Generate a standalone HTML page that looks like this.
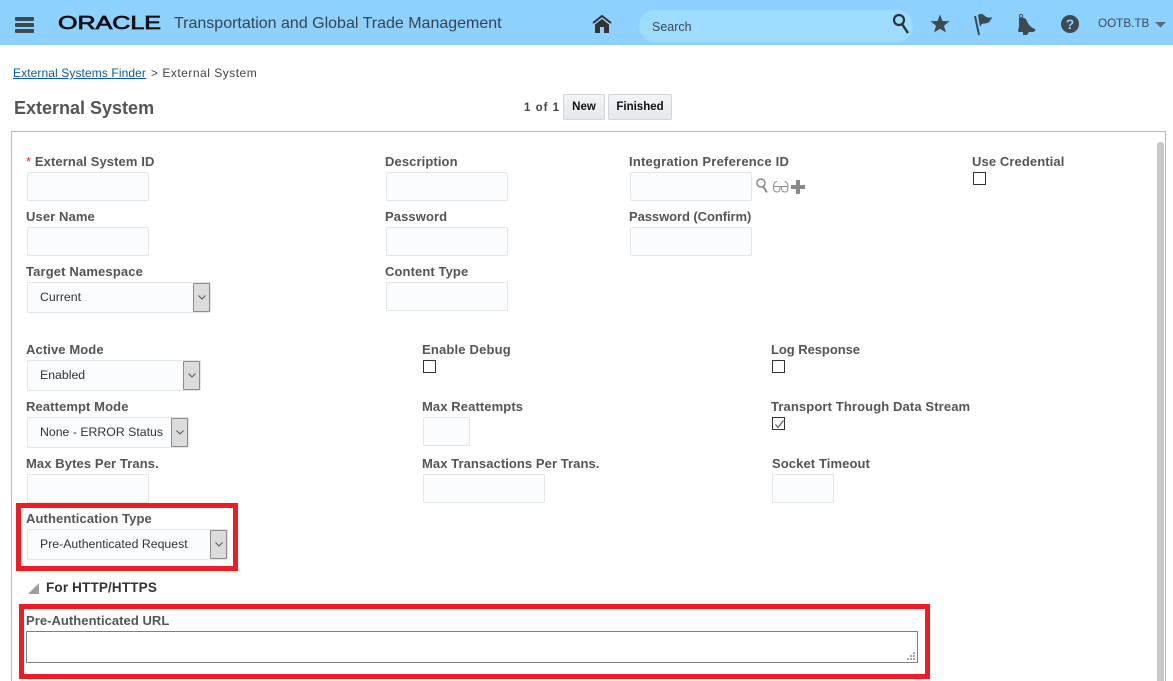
<!DOCTYPE html>
<html><head><meta charset="utf-8"><title>External System</title>
<style>
html,body{margin:0;padding:0;background:#fff;width:1173px;height:681px;overflow:hidden;font-family:"Liberation Sans",sans-serif}
#r{position:relative;width:1173px;height:681px;overflow:hidden}
#r div,#r a,#r svg{position:absolute;box-sizing:border-box}
.l{font-weight:bold;font-size:13px;color:#555;line-height:16px;height:16px;white-space:nowrap;letter-spacing:.1px}
.i{height:29px;background:#fbfcfe;border:1px solid #e1e6ea;border-radius:2px}
.s{height:31px;background:#fbfcfe;border:1px solid #e1e6ea;border-radius:2px;font-size:12.3px;color:#333;line-height:28px;padding-left:12px;white-space:nowrap}
.b{width:17px;height:29px;top:0;background:#dcdcdc;border:1px solid #8c8c8c;border-radius:1px}
.c{width:13px;height:13px;border:1px solid #333;background:#fff}
.r{border:5px solid #ee1c25}
.btn{height:26px;top:94px;border:1px solid #cfd6dc;border-radius:2px;background:linear-gradient(#f3f5f7,#e3e8ec);font-weight:bold;font-size:11.5px;color:#111;text-align:center;line-height:24px}
</style></head><body><div id="r">
<div style="left:0;top:0;width:1173px;height:45px;background:#8cd1ff"></div>
<div style="left:15px;top:17px;width:19px;height:3.5px;background:#3e4a52;border-radius:1px"></div>
<div style="left:15px;top:23px;width:19px;height:3.5px;background:#3e4a52;border-radius:1px"></div>
<div style="left:15px;top:29px;width:19px;height:3.5px;background:#3e4a52;border-radius:1px"></div>
<svg style="left:50px;top:8px" width="120" height="28"><text x="8" y="21" font-family="Liberation Sans" font-size="18" fill="#111" stroke="#111" stroke-width=".7" textLength="103" lengthAdjust="spacingAndGlyphs">ORACLE</text></svg>
<div style="left:174px;top:14px;font-size:16px;line-height:20px;color:#38444c;white-space:nowrap">Transportation and Global Trade Management</div>
<svg style="left:590px;top:13px" width="24" height="22" viewBox="0 0 24 22"><path d="M3 10 12 3l9 7" fill="none" stroke="#333" stroke-width="2"/><path d="M5 11.500 12 6l7 5.500V20h-5v-6h-4v6H5z" fill="#333"/></svg>
<div style="left:639px;top:10px;width:274px;height:32px;background:#9ddbff;border-radius:16px"></div>
<div style="left:652px;top:19px;font-size:12.500px;line-height:16px;color:#3f4a52">Search</div>
<svg style="left:890px;top:12px" width="22" height="24" viewBox="0 0 22 24"><circle cx="9" cy="8" r="5" fill="none" stroke="#2c3338" stroke-width="2.200"/><path d="M12 12l6 9" stroke="#2c3338" stroke-width="2.400"/></svg>
<svg style="left:930px;top:14px" width="20" height="20" viewBox="0 0 20 20"><path d="M10 .5l2.500 6.500 7 .3-5.500 4.400 1.900 6.800L10 14.700l-5.900 3.800L6 11.700.5 7.300l7-.3z" fill="#3e4a52"/></svg>
<svg style="left:972px;top:13px" width="22" height="23" viewBox="0 0 22 23"><path d="M3 3l4 19" stroke="#3e4a52" stroke-width="2"/><path d="M6 2c3-2 5-1 7 1s4 2 7 1c-1 3-3 6-5 6-2 1-4 0-5 1-1 1-2 3-2 3z" fill="#3e4a52"/></svg>
<svg style="left:1016px;top:13px" width="22" height="23" viewBox="0 0 22 23"><circle cx="5" cy="3" r="1.700" fill="none" stroke="#3e4a52"/><path d="M3 5c4-1 7 0 8 3 1 3 3 6 8 8 1 2-1 3-3 3H4c-2 0-2-1-2-2 1-2 1-3 1-5z" fill="#3e4a52"/><path d="M7 19h6l-2 3H7z" fill="#3e4a52"/></svg>
<div style="left:1061px;top:15px;width:18px;height:18px;border-radius:50%;background:#3e4a52;color:#8cd1ff;font-weight:bold;font-size:14px;line-height:18px;text-align:center">?</div>
<div style="left:1098px;top:16px;font-size:11.7px;line-height:16px;color:#3e4a52">OOTB.TB</div>
<svg style="left:1155px;top:22px" width="11" height="6"><path d="M0 0h11L5.500 5.500z" fill="#5a6a75"/></svg>

<a href="#" style="left:13px;top:65px;font-size:12px;line-height:16px;color:#0a5ba8;text-decoration:underline;white-space:nowrap;letter-spacing:.1px">External Systems Finder</a>
<div style="left:151px;top:65px;font-size:12px;line-height:16px;color:#444;white-space:nowrap;letter-spacing:.5px">&gt; External System</div>
<div style="left:14px;top:97px;font-size:18px;font-weight:bold;line-height:22px;color:#555;white-space:nowrap">External System</div>
<div style="left:524px;top:100px;font-size:11.500px;font-weight:bold;line-height:16px;color:#444;white-space:nowrap;letter-spacing:1px">1 of 1</div>
<div class="btn" style="left:563px;width:42px">New</div>
<div class="btn" style="left:608px;width:64px">Finished</div>

<div style="left:11px;top:131px;width:1155px;height:560px;border:1px solid #a9bcd4"></div>
<div style="left:1157px;top:142px;width:7px;height:545px;background:#c8c8c8;border-radius:3px 3px 0 0"></div>

<div class="l" style="left:26px;top:154px"><span style="color:#e8202a;font-weight:normal">*</span> External System ID</div>
<div class="i" style="left:27px;top:172px;width:122px"></div>
<div class="l" style="left:385px;top:154px">Description</div>
<div class="i" style="left:386px;top:172px;width:122px"></div>
<div class="l" style="left:629px;top:154px;letter-spacing:.22px">Integration Preference ID</div>
<div class="i" style="left:630px;top:172px;width:122px"></div>
<svg style="left:754px;top:177px" width="54" height="18" viewBox="0 0 54 18"><circle cx="7" cy="6" r="4" fill="none" stroke="#8a8a8a" stroke-width="1.500"/><path d="M9.500 10l3.500 5.500" stroke="#8a8a8a" stroke-width="2"/><path d="M19.500 9.500h6.500c0 5-1 5.500-3 5.500s-3.500-.5-3.500-5.500zM27.500 9.500H34c0 5-1 5.500-3 5.500s-3.500-.5-3.500-5.500zM26 9.500h2M19.500 9.500c0-3 1.500-5 3.500-5M34 9.500c0-3-1.500-5-3.500-5" fill="none" stroke="#8a8a8a"/><path d="M42 3h4v5h5v4h-5v5h-4v-5h-5V8h5z" fill="#8a8a8a"/></svg>
<div class="l" style="left:972px;top:154px">Use Credential</div>
<div class="c" style="left:973px;top:172px"></div>

<div class="l" style="left:26px;top:209px">User Name</div>
<div class="i" style="left:27px;top:227px;width:122px"></div>
<div class="l" style="left:385px;top:209px">Password</div>
<div class="i" style="left:386px;top:227px;width:122px"></div>
<div class="l" style="left:629px;top:209px;letter-spacing:-.07px">Password (Confirm)</div>
<div class="i" style="left:630px;top:227px;width:122px"></div>

<div class="l" style="left:26px;top:264px;letter-spacing:.15px">Target Namespace</div>
<div class="s" style="left:27px;top:282px;width:184px">Current<div class="b" style="left:165px"><svg style="left:4px;top:11px" width="8" height="5"><path d="M.5.500 4 4 7.500.500" fill="none" stroke="#555"/></svg></div></div>
<div class="l" style="left:385px;top:264px">Content Type</div>
<div class="i" style="left:386px;top:282px;width:122px"></div>

<div class="l" style="left:26px;top:342px">Active Mode</div>
<div class="s" style="left:27px;top:360px;width:174px">Enabled<div class="b" style="left:155px"><svg style="left:4px;top:11px" width="8" height="5"><path d="M.5.500 4 4 7.500.500" fill="none" stroke="#555"/></svg></div></div>
<div class="l" style="left:422px;top:342px;letter-spacing:.18px">Enable Debug</div>
<div class="c" style="left:423px;top:360px"></div>
<div class="l" style="left:771px;top:342px;letter-spacing:-.05px">Log Response</div>
<div class="c" style="left:772px;top:360px"></div>

<div class="l" style="left:26px;top:399px">Reattempt Mode</div>
<div class="s" style="left:27px;top:417px;width:162px">None - ERROR Status<div class="b" style="left:143px"><svg style="left:4px;top:11px" width="8" height="5"><path d="M.5.500 4 4 7.500.500" fill="none" stroke="#555"/></svg></div></div>
<div class="l" style="left:422px;top:399px">Max Reattempts</div>
<div class="i" style="left:423px;top:417px;width:47px"></div>
<div class="l" style="left:771px;top:399px;letter-spacing:.12px">Transport Through Data Stream</div>
<div class="c" style="left:772px;top:417px"><svg style="left:1px;top:1px" width="11" height="11"><path d="M1.500 5.500 4 8.500 9.500 1.500" fill="none" stroke="#555" stroke-width="1.100"/></svg></div>

<div class="l" style="left:26px;top:456px">Max Bytes Per Trans.</div>
<div class="i" style="left:27px;top:474px;width:122px"></div>
<div class="l" style="left:422px;top:456px;letter-spacing:.07px">Max Transactions Per Trans.</div>
<div class="i" style="left:423px;top:474px;width:122px"></div>
<div class="l" style="left:772px;top:456px">Socket Timeout</div>
<div class="i" style="left:772px;top:474px;width:62px"></div>

<div class="r" style="left:16px;top:503px;width:222px;height:68px"></div>
<div class="l" style="left:26px;top:511px">Authentication Type</div>
<div class="s" style="left:27px;top:529px;width:201px">Pre-Authenticated Request<div class="b" style="left:182px"><svg style="left:4px;top:11px" width="8" height="5"><path d="M.5.500 4 4 7.500.500" fill="none" stroke="#555"/></svg></div></div>

<svg style="left:28px;top:583px" width="12" height="12"><path d="M11 0v11H0z" fill="#9a9ea2"/></svg>
<div style="left:46px;top:580px;font-size:13.500px;font-weight:bold;line-height:16px;color:#333;white-space:nowrap;letter-spacing:.16px">For HTTP/HTTPS</div>

<div class="r" style="left:19px;top:604px;width:911px;height:75px"></div>
<div class="l" style="left:26px;top:613px;letter-spacing:.05px">Pre-Authenticated URL</div>
<div style="left:26px;top:631px;width:892px;height:32px;border:1px solid #808080;background:#fff"></div>
<svg style="left:906px;top:651px" width="10" height="10"><path d="M7 1h2v2H7zM4 4h2v2H4zM7 4h2v2H7zM1 7h2v2H1zM4 7h2v2H4zM7 7h2v2H7z" fill="#aaa"/></svg>
</div></body></html>
